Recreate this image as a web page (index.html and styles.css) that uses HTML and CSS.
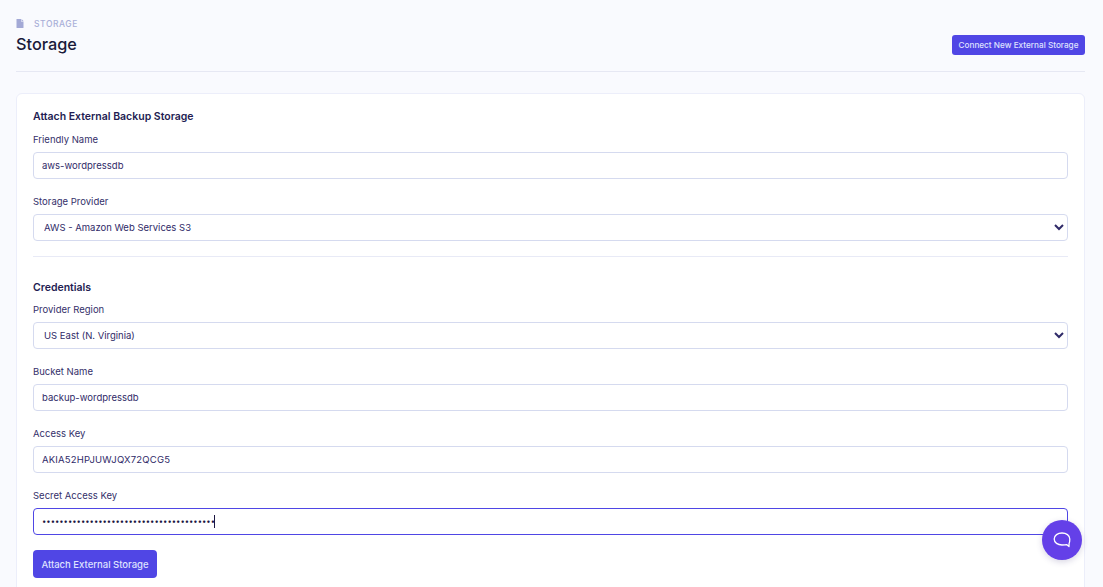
FILE: index.html
```html
<!DOCTYPE html>
<html lang="en">
<head>
<meta charset="utf-8">
<title>Storage</title>
<link rel="stylesheet" href="styles.css">
</head>
<body>
<main class="page">
  <header class="page-header">
    <div class="titles">
      <div class="crumb">
        <svg class="crumb-icon" viewBox="0 0 8 9" width="8" height="9"><path d="M0.5 0H5V2.6H7.5V8.4A.6.6 0 0 1 6.9 9H1.1A.6.6 0 0 1 .5 8.4Z M5.5 0L7.5 2.1H5.5Z" fill="#a3a9d6"/></svg>
        <span>STORAGE</span>
      </div>
      <h1>Storage</h1>
    </div>
    <button class="btn btn-small" type="button">Connect New External Storage</button>
  </header>
  <section class="card">
    <h2>Attach External Backup Storage</h2>
    <div class="field">
      <label for="name">Friendly Name</label>
      <input id="name" type="text" value="aws-wordpressdb">
    </div>
    <div class="field">
      <label for="provider">Storage Provider</label>
      <select id="provider"><option>AWS - Amazon Web Services S3</option></select>
    </div>
    <hr class="divider">
    <h2>Credentials</h2>
    <div class="field field-tight">
      <label for="region">Provider Region</label>
      <select id="region"><option>US East (N. Virginia)</option></select>
    </div>
    <div class="field">
      <label for="bucket">Bucket Name</label>
      <input id="bucket" type="text" value="backup-wordpressdb">
    </div>
    <div class="field">
      <label for="key">Access Key</label>
      <input id="key" class="wide" type="text" value="AKIA52HPJUWJQX72QCG5">
    </div>
    <div class="field">
      <label for="secret">Secret Access Key</label>
      <div class="secret-wrap">
        <input id="secret" class="focused" type="password" value="aaaaaaaaaaaaaaaaaaaaaaaaaaaaaaaaaaaaaaaa">
        <span class="caret"></span>
      </div>
    </div>
    <button class="btn btn-main" type="button">Attach External Storage</button>
  </section>
</main>
<button class="chat" type="button" aria-label="Chat">
  <svg viewBox="0 0 18 16" width="18" height="16"><path d="M9 1C4.8 1 1.2 3.3 1.2 7S4.8 13 9 13C10.4 13 12.5 13 13.6 12.6L16 14.6L16.1 11.5C16.6 10.5 16.8 8.2 16.8 7C16.8 3.3 13.2 1 9 1Z" fill="none" stroke="#fff" stroke-width="1.3" stroke-linejoin="round"/></svg>
</button>
</body>
</html>
```
FILE: styles.css
```css
* { box-sizing: border-box; }
html, body { margin: 0; height: 100%; overflow: hidden; }
body {
  background: #f9fafe;
  color: #1b1642;
  font-family: Inter, "Liberation Sans", sans-serif;
}
.page { padding: 0 18px 0 16px; }
.page-header {
  height: 72px;
  display: flex;
  justify-content: space-between;
  align-items: flex-start;
  border-bottom: 1px solid #e6e8f3;
}
.titles { padding-top: 18px; }
.crumb {
  display: flex;
  align-items: center;
  gap: 10px;
  height: 12px;
  font-size: 8.5px;
  font-weight: 500;
  letter-spacing: .55px;
  color: #a9afd8;
}
.crumb-icon { display: block; margin-top: -1px; }
h1 {
  margin: 3px 0 0;
  font-size: 16.3px;
  line-height: 22px;
  font-weight: 500;
  color: #1a1a3a;
}
.btn {
  border: 0;
  font-family: inherit;
  background: #5046e5;
  color: #dfe2ff;
  font-weight: 500;
}
.btn-small {
  margin-top: 35px;
  height: 20px;
  width: 133px;
  padding: 0;
  font-size: 8.2px;
  border-radius: 3px;
}
.card {
  margin-top: 21px;
  height: 520px;
  background: #fff;
  border: 1px solid #eceefa;
  border-radius: 6px;
  padding: 15px 16px;
}
h2 {
  margin: 0;
  font-size: 10.5px;
  line-height: 16px;
  font-weight: 600;
  color: #231c52;
}
.field { margin-top: 8px; }
.field + .field { margin-top: 16px; }
.field-tight { margin-top: 7px; }
label {
  display: block;
  font-size: 9.5px;
  line-height: 14px;
  font-weight: 400;
  color: #34306a;
  margin-bottom: 5px;
}
input, select {
  display: block;
  width: 100%;
  height: 27px;
  font-family: inherit;
  font-size: 9.5px;
  color: #2f2a68;
  background: #fff;
  border: 1px solid #d5daef;
  border-radius: 4px;
  padding: 0 8px;
  outline: none;
}
select { padding: 0 6px; }
input.wide { letter-spacing: .2px; }
.secret-wrap { position: relative; }
input.focused { border-color: #4f46e5; color: #1b1642; font-size: 7.7px; }
.caret {
  position: absolute;
  left: 181px;
  top: 7px;
  width: 1px;
  height: 13px;
  background: #1b1642;
}
.divider {
  border: 0;
  border-top: 1px solid #e8eaf6;
  margin: 15px 0 23px;
}
.btn-main {
  margin-top: 15px;
  width: 124px;
  height: 28px;
  padding: 0;
  font-size: 9.5px;
  border-radius: 4px;
}
.chat {
  position: fixed;
  left: 1042px;
  top: 520px;
  width: 40px;
  height: 40px;
  padding: 0;
  border: 0;
  border-radius: 50%;
  background: #6440e8;
  box-shadow: 0 2px 6px rgba(60, 50, 120, .2);
  display: flex;
  align-items: center;
  justify-content: center;
}
```
